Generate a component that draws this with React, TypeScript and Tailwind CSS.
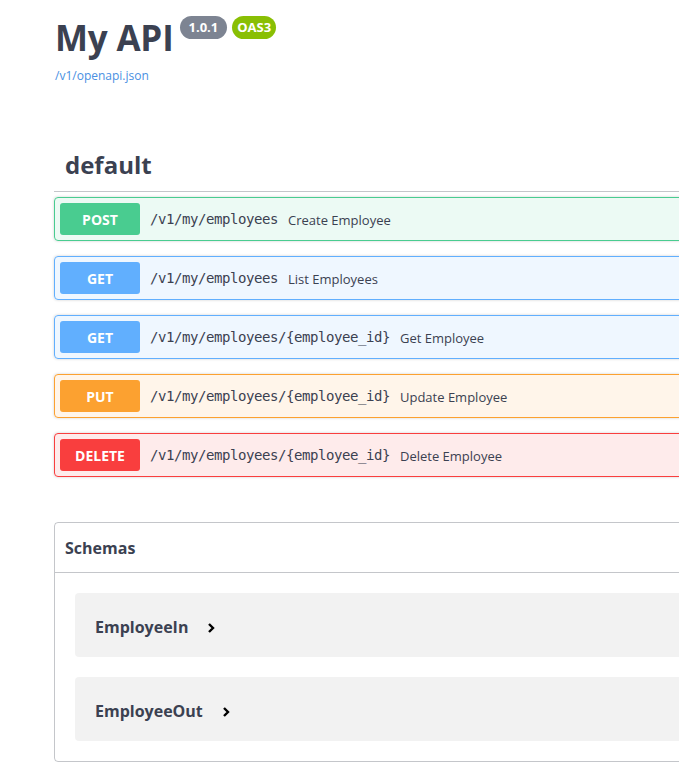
const ops = [
  { method: "POST", path: "/v1/my/employees", summary: "Create Employee", border: "border-[#49cc90]", bg: "bg-[#49cc90]/10", badge: "bg-[#49cc90]" },
  { method: "GET", path: "/v1/my/employees", summary: "List Employees", border: "border-[#61affe]", bg: "bg-[#61affe]/10", badge: "bg-[#61affe]" },
  { method: "GET", path: "/v1/my/employees/{employee_id}", summary: "Get Employee", border: "border-[#61affe]", bg: "bg-[#61affe]/10", badge: "bg-[#61affe]" },
  { method: "PUT", path: "/v1/my/employees/{employee_id}", summary: "Update Employee", border: "border-[#fca130]", bg: "bg-[#fca130]/10", badge: "bg-[#fca130]" },
  { method: "DELETE", path: "/v1/my/employees/{employee_id}", summary: "Delete Employee", border: "border-[#f93e3e]", bg: "bg-[#f93e3e]/10", badge: "bg-[#f93e3e]" },
];

const models = ["EmployeeIn", "EmployeeOut"];

function Chevron() {
  return (
    <svg width="10" height="12" viewBox="0 0 10 12" className="ml-[18px] mt-[3px]">
      <polyline points="3,2 7,6 3,10" fill="none" stroke="#000" strokeWidth="2.4" />
    </svg>
  );
}

export default function App() {
  return (
    <div className="w-full overflow-hidden bg-white text-[#3b4151] font-['Open_Sans',sans-serif] min-h-[776px]">
      <div className="w-[1460px] pl-[54px]">
        {/* info */}
        <div className="pt-[16px] pl-px">
          <div className="flex items-start">
            <h2 className="mt-[4px] text-[35px] leading-[36px] font-bold tracking-[-0.2px]">My API</h2>
            <span className="ml-[6px] flex h-[23px] items-center rounded-full bg-[#7d8492] px-[9px] text-[13px] font-bold text-white">
              1.0.1
            </span>
            <span className="ml-[5px] flex h-[23px] items-center rounded-full bg-[#89bf04] px-[5px] text-[13px] font-bold text-white">
              OAS3
            </span>
          </div>
          <a className="mt-[12px] block text-[12px] leading-[16px] text-[#4990e2]">/v1/openapi.json</a>
        </div>

        {/* default tag */}
        <h3 className="mt-[55px] border-b border-[#3b4151]/30 py-[10px] pl-[11px] text-[24px] leading-[32px] font-bold">
          default
        </h3>
        <div className="mt-[5px]">
          {ops.map((op, i) => (
            <div
              key={i}
              className={`mb-[15px] flex items-center rounded-[4px] border p-[5px] shadow-[0_0_3px_rgba(0,0,0,0.19)] ${op.border} ${op.bg}`}
            >
              <span className={`flex h-[32px] w-[80px] items-center justify-center rounded-[3px] text-[14px] font-bold text-white ${op.badge}`}>
                {op.method}
              </span>
              <span className="ml-[10px] font-['DejaVu_Sans_Mono',monospace] text-[14px] tracking-[-0.43px] text-[#3b4151]">
                {op.path}
              </span>
              <span className="ml-[10px] mt-[3px] text-[13px] text-[#3b4151]">{op.summary}</span>
            </div>
          ))}
        </div>

        {/* schemas */}
        <section className="mt-[45px] rounded-[4px] border border-[#3b4151]/30">
          <h4 className="flex h-[50px] items-center border-b border-[#3b4151]/30 px-[10px] text-[16px] font-bold">Schemas</h4>
          <div className="flex flex-col gap-[20px] p-[20px]">
            {models.map((m) => (
              <div key={m} className="flex h-[64px] items-center rounded-[4px] bg-black/5 px-[20px] pt-[3px]">
                <span className="text-[16px] font-bold">{m}</span>
                <Chevron />
              </div>
            ))}
          </div>
        </section>
      </div>
    </div>
  );
}
